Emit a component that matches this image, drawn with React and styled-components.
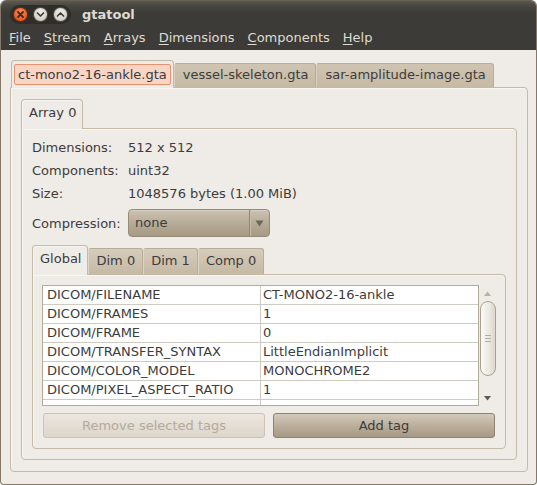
import React from 'react';
import styled, { createGlobalStyle, css } from 'styled-components';

const FRAME = '#c4baa7';
const PAGE_BG = '#efebe7';
const TEXT = '#3c3c3c';

const GlobalStyle = createGlobalStyle`
  html, body { margin: 0; padding: 0; background: #ffffff; }
  body {
    font-family: "DejaVu Sans", "Liberation Sans", sans-serif;
    font-size: 13px;
    color: ${TEXT};
  }
  * { box-sizing: border-box; }
`;

const Window = styled.div`
  width: 537px;
  height: 485px;
  display: flex;
  flex-direction: column;
  border: 1px solid #857866;
  border-top-color: #6a6152;
  border-radius: 6px 6px 4px 4px;
  overflow: hidden;
  background: ${PAGE_BG};
`;

const TitleBar = styled.div`
  height: 25px;
  display: flex;
  align-items: center;
  padding: 2px 0 0 9px;
  gap: 11px;
  background: linear-gradient(#5a5853 0px, #48463f 5px, #3c3b37 12px);
`;

const WinButtons = styled.div`
  display: flex;
  gap: 5px;
  padding: 2px 3px;
  border-radius: 10px;
  background: #2e2d2a;
`;

const WinButton = styled.div`
  width: 15px;
  height: 15px;
  border-radius: 50%;
  display: flex;
  align-items: center;
  justify-content: center;
  ${(p) =>
    p.$close
      ? css`
          background: radial-gradient(circle at 50% 35%, #f8915f 0%, #e65a24 70%, #c8461a 100%);
          border: 1px solid #6e2c12;
        `
      : css`
          background: radial-gradient(circle at 50% 35%, #f2f0ec 0%, #d3cfc7 70%, #b3aea4 100%);
          border: 1px solid #55524b;
        `}
`;

const Title = styled.div`
  font-weight: bold;
  font-size: 13px;
  color: #dfdbd2;
  line-height: 16px;
`;

const MenuBar = styled.div`
  height: 24px;
  display: flex;
  padding-left: 1px;
  background: #3c3b37;
`;

const MenuItem = styled.div`
  padding: 0 6px 0 7px;
  line-height: 24px;
  color: #dfdbd2;
  u { text-decoration-thickness: 1px; text-underline-offset: 2px; }
`;

const Content = styled.div`
  flex: 1;
  display: flex;
  flex-direction: column;
  padding: 10px 8px 12px 9px;
  min-height: 0;
`;

const Notebook = styled.div`
  display: flex;
  flex-direction: column;
  flex: 1;
  min-height: 0;
`;

const TabRow = styled.div`
  display: flex;
  align-items: flex-end;
  height: ${(p) => p.$h}px;
  padding-left: ${(p) => p.$pl || 0}px;
  flex-shrink: 0;
`;

const Page = styled.div`
  flex: 1;
  min-height: 0;
  display: flex;
  flex-direction: column;
  border: 1px solid ${FRAME};
  border-radius: 0 4px 4px 4px;
  box-shadow: inset 1px 1px 0 #f8f6f3;
  padding: ${(p) => p.$pad};
`;

const FileTab = styled.div`
  position: relative;
  white-space: nowrap;
  ${(p) =>
    p.$active
      ? css`
          height: 28px;
          margin-bottom: -1px;
          z-index: 1;
          padding: 3px 2px 0;
          background: ${PAGE_BG};
          border: 1px solid ${FRAME};
          border-bottom: none;
          border-radius: 4px 4px 0 0;
        `
      : css`
          height: 24px;
          padding: 0 7px 0 8px;
          line-height: 22px;
          background: linear-gradient(#d0c5b2, #c5b9a4);
          border: 1px solid #b8ac97;
          border-bottom: none;
          border-left-color: #d9d0c1;
          border-radius: 3px 3px 0 0;
        `}
`;

const FocusBox = styled.div`
  height: 21px;
  padding: 0 3px;
  line-height: 19px;
  background: #f9d5c6;
  border: 1px solid #e8936f;
  border-radius: 2px;
`;

const InnerTab = styled.div`
  position: relative;
  white-space: nowrap;
  ${(p) =>
    p.$active
      ? css`
          height: 30px;
          padding: 0 6px 0 7px;
          margin-bottom: -1px;
          z-index: 1;
          line-height: 25px;
          background: ${PAGE_BG};
          border: 1px solid ${FRAME};
          border-bottom: none;
          border-radius: 4px 4px 0 0;
          box-shadow: inset 1px 1px 0 #f8f6f3;
        `
      : css`
          height: 26px;
          padding: 0 7px;
          line-height: 24px;
          background: linear-gradient(#d6ccbb, #c5b9a4);
          border: 1px solid #b9ad98;
          border-bottom: none;
          border-left-color: #ddd5c7;
          border-radius: 3px 3px 0 0;
        `}
`;

const InfoGrid = styled.div`
  display: grid;
  grid-template-columns: 96px 1fr;
  grid-auto-rows: 23px;
  line-height: 23px;
  padding-top: 1px;
  flex-shrink: 0;
`;

const CompressionRow = styled.div`
  display: flex;
  align-items: center;
  height: 28px;
  margin-top: 4px;
  flex-shrink: 0;
`;

const Label = styled.div`
  width: 96px;
`;

const Combo = styled.div`
  width: 142px;
  height: 28px;
  display: flex;
  border: 1px solid #978b78;
  border-radius: 4px;
  background: linear-gradient(#cbc2b2, #b3a792 60%, #a89b86);
  box-shadow: inset 0 1px 0 #d8d0c2;
`;

const ComboText = styled.div`
  flex: 1;
  padding-left: 6px;
  line-height: 26px;
`;

const ComboArrow = styled.div`
  width: 20px;
  display: flex;
  align-items: center;
  justify-content: center;
  border-left: 1px solid #92866f;
  box-shadow: inset 1px 0 0 #c7bdac;
`;

const GlobalNotebook = styled(Notebook)`
  margin-top: 8px;
`;

const TableArea = styled.div`
  flex: 1;
  min-height: 0;
  display: flex;
`;

const TableBox = styled.div`
  flex: 1;
  border: 1px solid #b2ab9c;
  background: #ffffff;
  overflow: hidden;
  display: grid;
  grid-template-columns: 218px 1fr;
  grid-auto-rows: 19px;
  align-content: start;
`;

const Cell = styled.div`
  padding-left: ${(p) => (p.$first ? 4 : 2)}px;
  line-height: 18px;
  border-bottom: 1px solid #d0cbc2;
  border-right: ${(p) => (p.$first ? '1px solid #d0cbc2' : 'none')};
  white-space: nowrap;
  overflow: hidden;
`;

const Scrollbar = styled.div`
  width: 17px;
  display: flex;
  flex-direction: column;
  align-items: center;
`;

const ScrollArrow = styled.div`
  height: 16px;
  width: 17px;
  display: flex;
  align-items: center;
  justify-content: center;
  flex-shrink: 0;
`;

const Thumb = styled.div`
  width: 16px;
  height: 75px;
  border: 1px solid #aaa291;
  border-radius: 8px;
  background: linear-gradient(90deg, #fbfaf8, #ebe7e1 60%, #dcd6cc);
  display: flex;
  flex-direction: column;
  align-items: center;
  justify-content: center;
  gap: 2px;
  flex-shrink: 0;
`;

const Grip = styled.div`
  width: 6px;
  height: 1px;
  background: #b5ae9f;
`;

const Spacer = styled.div`
  flex: 1;
`;

const ButtonRow = styled.div`
  display: flex;
  gap: 8px;
  margin-top: 7px;
  padding: 0 1px;
  flex-shrink: 0;
`;

const Button = styled.div`
  flex: 1;
  height: 25px;
  border-radius: 3px;
  display: flex;
  align-items: center;
  justify-content: center;
  ${(p) =>
    p.$disabled
      ? css`
          color: #b4aa9b;
          background: linear-gradient(#ebe6df, #ddd6cb);
          border: 1px solid #cbc2b3;
        `
      : css`
          color: ${TEXT};
          background: linear-gradient(#d4cabb, #b9ad9a 55%, #a69984);
          border: 1px solid #8f8370;
        `}
`;

const rows = [
  ['DICOM/FILENAME', 'CT-MONO2-16-ankle'],
  ['DICOM/FRAMES', '1'],
  ['DICOM/FRAME', '0'],
  ['DICOM/TRANSFER_SYNTAX', 'LittleEndianImplicit'],
  ['DICOM/COLOR_MODEL', 'MONOCHROME2'],
  ['DICOM/PIXEL_ASPECT_RATIO', '1'],
  ['', ''],
];

const menus = ['File', 'Stream', 'Arrays', 'Dimensions', 'Components', 'Help'];

export default function App() {
  return (
    <>
      <GlobalStyle />
      <Window>
        <TitleBar>
          <WinButtons>
            <WinButton $close>
              <svg width="9" height="9" viewBox="0 0 9 9">
                <path d="M2 2L7 7M7 2L2 7" stroke="#3a2a22" strokeWidth="1.8" strokeLinecap="round" />
              </svg>
            </WinButton>
            <WinButton>
              <svg width="9" height="9" viewBox="0 0 9 9">
                <path d="M1.5 3L4.5 6L7.5 3" fill="none" stroke="#3c3b37" strokeWidth="1.7" strokeLinecap="round" strokeLinejoin="round" />
              </svg>
            </WinButton>
            <WinButton>
              <svg width="9" height="9" viewBox="0 0 9 9">
                <path d="M1.5 6L4.5 3L7.5 6" fill="none" stroke="#3c3b37" strokeWidth="1.7" strokeLinecap="round" strokeLinejoin="round" />
              </svg>
            </WinButton>
          </WinButtons>
          <Title>gtatool</Title>
        </TitleBar>
        <MenuBar>
          {menus.map((m) => (
            <MenuItem key={m}>
              <u>{m[0]}</u>
              {m.slice(1)}
            </MenuItem>
          ))}
        </MenuBar>
        <Content>
          <Notebook>
            <TabRow $h={27} $pl={1}>
              <FileTab $active>
                <FocusBox>ct-mono2-16-ankle.gta</FocusBox>
              </FileTab>
              <FileTab>vessel-skeleton.gta</FileTab>
              <FileTab>sar-amplitude-image.gta</FileTab>
            </TabRow>
            <Page $pad="11px 10px 11px 10px">
              <Notebook>
                <TabRow $h={29}>
                  <InnerTab $active>Array 0</InnerTab>
                </TabRow>
                <Page $pad="6px 10px 10px 10px">
                  <InfoGrid>
                    <div>Dimensions:</div>
                    <div>512 x 512</div>
                    <div>Components:</div>
                    <div>uint32</div>
                    <div>Size:</div>
                    <div>1048576 bytes (1.00 MiB)</div>
                  </InfoGrid>
                  <CompressionRow>
                    <Label>Compression:</Label>
                    <Combo>
                      <ComboText>none</ComboText>
                      <ComboArrow>
                        <svg width="9" height="7" viewBox="0 0 9 7">
                          <path d="M0.5 0.5H8.5L4.5 6.5Z" fill="#6b665c" />
                        </svg>
                      </ComboArrow>
                    </Combo>
                  </CompressionRow>
                  <GlobalNotebook>
                    <TabRow $h={29}>
                      <InnerTab $active>Global</InnerTab>
                      <InnerTab>Dim 0</InnerTab>
                      <InnerTab>Dim 1</InnerTab>
                      <InnerTab>Comp 0</InnerTab>
                    </TabRow>
                    <Page $pad="10px 9px 10px 9px">
                      <TableArea>
                        <TableBox>
                          {rows.map(([k, v], i) => (
                            <React.Fragment key={i}>
                              <Cell $first>{k}</Cell>
                              <Cell>{v}</Cell>
                            </React.Fragment>
                          ))}
                        </TableBox>
                        <Scrollbar>
                          <ScrollArrow>
                            <svg width="7" height="5" viewBox="0 0 7 5">
                              <path d="M0 5L3.5 0.5L7 5Z" fill="#b9b3a8" />
                            </svg>
                          </ScrollArrow>
                          <Thumb>
                            <Grip />
                            <Grip />
                            <Grip />
                          </Thumb>
                          <Spacer />
                          <ScrollArrow>
                            <svg width="7" height="5" viewBox="0 0 7 5">
                              <path d="M0 0H7L3.5 4.5Z" fill="#5e5a52" />
                            </svg>
                          </ScrollArrow>
                        </Scrollbar>
                      </TableArea>
                      <ButtonRow>
                        <Button $disabled>Remove selected tags</Button>
                        <Button>Add tag</Button>
                      </ButtonRow>
                    </Page>
                  </GlobalNotebook>
                </Page>
              </Notebook>
            </Page>
          </Notebook>
        </Content>
      </Window>
    </>
  );
}
